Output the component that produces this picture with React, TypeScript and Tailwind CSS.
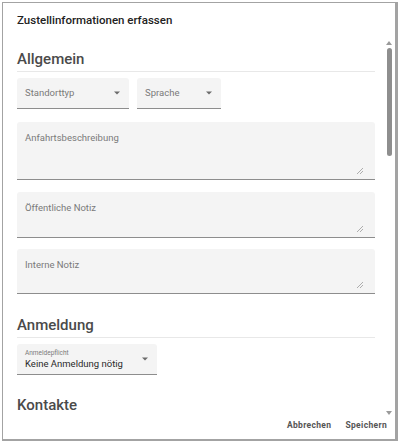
import React from 'react';

function Caret() {
    return (
        <svg width="6" height="4" viewBox="0 0 10 5" className="shrink-0">
            <path d="M0 0 L5 5 L10 0 Z" fill="#6b6b6b" />
        </svg>
    );
}

function Grip() {
    return (
        <svg width="6" height="6" viewBox="0 0 6 6" className="absolute right-[12px] bottom-[5px]">
            <path d="M6 0 L0 6 M6 3 L3 6" stroke="#9a9a9a" strokeWidth="0.8" />
        </svg>
    );
}

function SectionHeading({ title }: { title: string }) {
    return (
        <div className="border-b border-[#e8e8e8]">
            <div className="text-[15px] leading-[20px] font-medium text-[#4a4a4a] pb-[2px]">{title}</div>
        </div>
    );
}

function TextArea({ label, height }: { label: string; height: string }) {
    return (
        <div className={`relative bg-[#f4f4f4] border-b border-[#8d8d8d] rounded-t-[3px] ${height}`}>
            <div className="pl-[8px] pt-[10px] text-[9.5px] leading-[12px] text-[#7a7a7a]">{label}</div>
            <Grip />
        </div>
    );
}

function Scrollbar() {
    return (
        <div className="w-[12px] flex flex-col items-center pt-[2px]">
            <svg width="6" height="4" viewBox="0 0 6 4">
                <path d="M0 4 L3 0 L6 4 Z" fill="#9a9a9a" />
            </svg>
            <div className="w-[5px] h-[108px] mt-[3px] rounded-full bg-[#8e8e8e]" />
            <div className="flex-1" />
            <svg width="6" height="4" viewBox="0 0 6 4">
                <path d="M0 0 L3 4 L6 0 Z" fill="#9a9a9a" />
            </svg>
        </div>
    );
}

export default function App() {
    return (
        <div className="w-[400px] h-[444px] bg-white overflow-hidden" style={{ fontFamily: 'Roboto, "Noto Sans", sans-serif' }}>
            <div className="ml-[2px] mt-[2px] w-[396px] h-[439px] border border-[#a3a3a3] border-r-[3px] border-b-[2px] bg-white flex flex-col">
                <div className="h-[36px] pl-[14px] flex items-center text-[11.5px] font-medium text-[#222]">
                    Zustellinformationen erfassen
                </div>
                <div className="flex flex-1 min-h-0">
                    <div className="flex-1 min-w-0 overflow-hidden pl-[14px] pr-[10px] pt-[10px]">
                        <div className="w-[358px] flex flex-col">
                            <SectionHeading title="Allgemein" />
                            <div className="flex gap-[8px] mt-[6px]">
                                <div className="w-[112px] h-[31px] bg-[#f4f4f4] border-b border-[#8d8d8d] rounded-t-[3px] flex items-center justify-between pl-[8px] pr-[9px]">
                                    <span className="text-[9.5px] text-[#7a7a7a]">Standorttyp</span>
                                    <Caret />
                                </div>
                                <div className="w-[84px] h-[31px] bg-[#f4f4f4] border-b border-[#8d8d8d] rounded-t-[3px] flex items-center justify-between pl-[8px] pr-[9px]">
                                    <span className="text-[9.5px] text-[#7a7a7a]">Sprache</span>
                                    <Caret />
                                </div>
                            </div>
                            <div className="mt-[13px]">
                                <TextArea label="Anfahrtsbeschreibung" height="h-[58px]" />
                            </div>
                            <div className="mt-[12px]">
                                <TextArea label="Öffentliche Notiz" height="h-[46px]" />
                            </div>
                            <div className="mt-[11px]">
                                <TextArea label="Interne Notiz" height="h-[45px]" />
                            </div>
                            <div className="mt-[21px]">
                                <SectionHeading title="Anmeldung" />
                            </div>
                            <div className="mt-[6px] w-[140px] h-[31px] bg-[#f4f4f4] border-b border-[#8d8d8d] rounded-t-[3px] flex items-center justify-between pl-[8px] pr-[9px]">
                                <div className="flex flex-col">
                                    <span className="text-[6.5px] leading-[8px] text-[#7a7a7a]">Anmeldepflicht</span>
                                    <span className="text-[9.5px] leading-[12px] text-[#2a2a2a] mt-[1px]">Keine Anmeldung nötig</span>
                                </div>
                                <Caret />
                            </div>
                            <div className="mt-[20px] text-[15px] leading-[20px] font-medium text-[#4a4a4a]">Kontakte</div>
                        </div>
                    </div>
                    <Scrollbar />
                </div>
                <div className="h-[24px] flex items-start justify-end gap-[14px] pr-[8px] pt-[4px] text-[8.5px] font-bold tracking-[0.04em] text-[#555]">
                    <span>Abbrechen</span>
                    <span>Speichern</span>
                </div>
            </div>
        </div>
    );
}
